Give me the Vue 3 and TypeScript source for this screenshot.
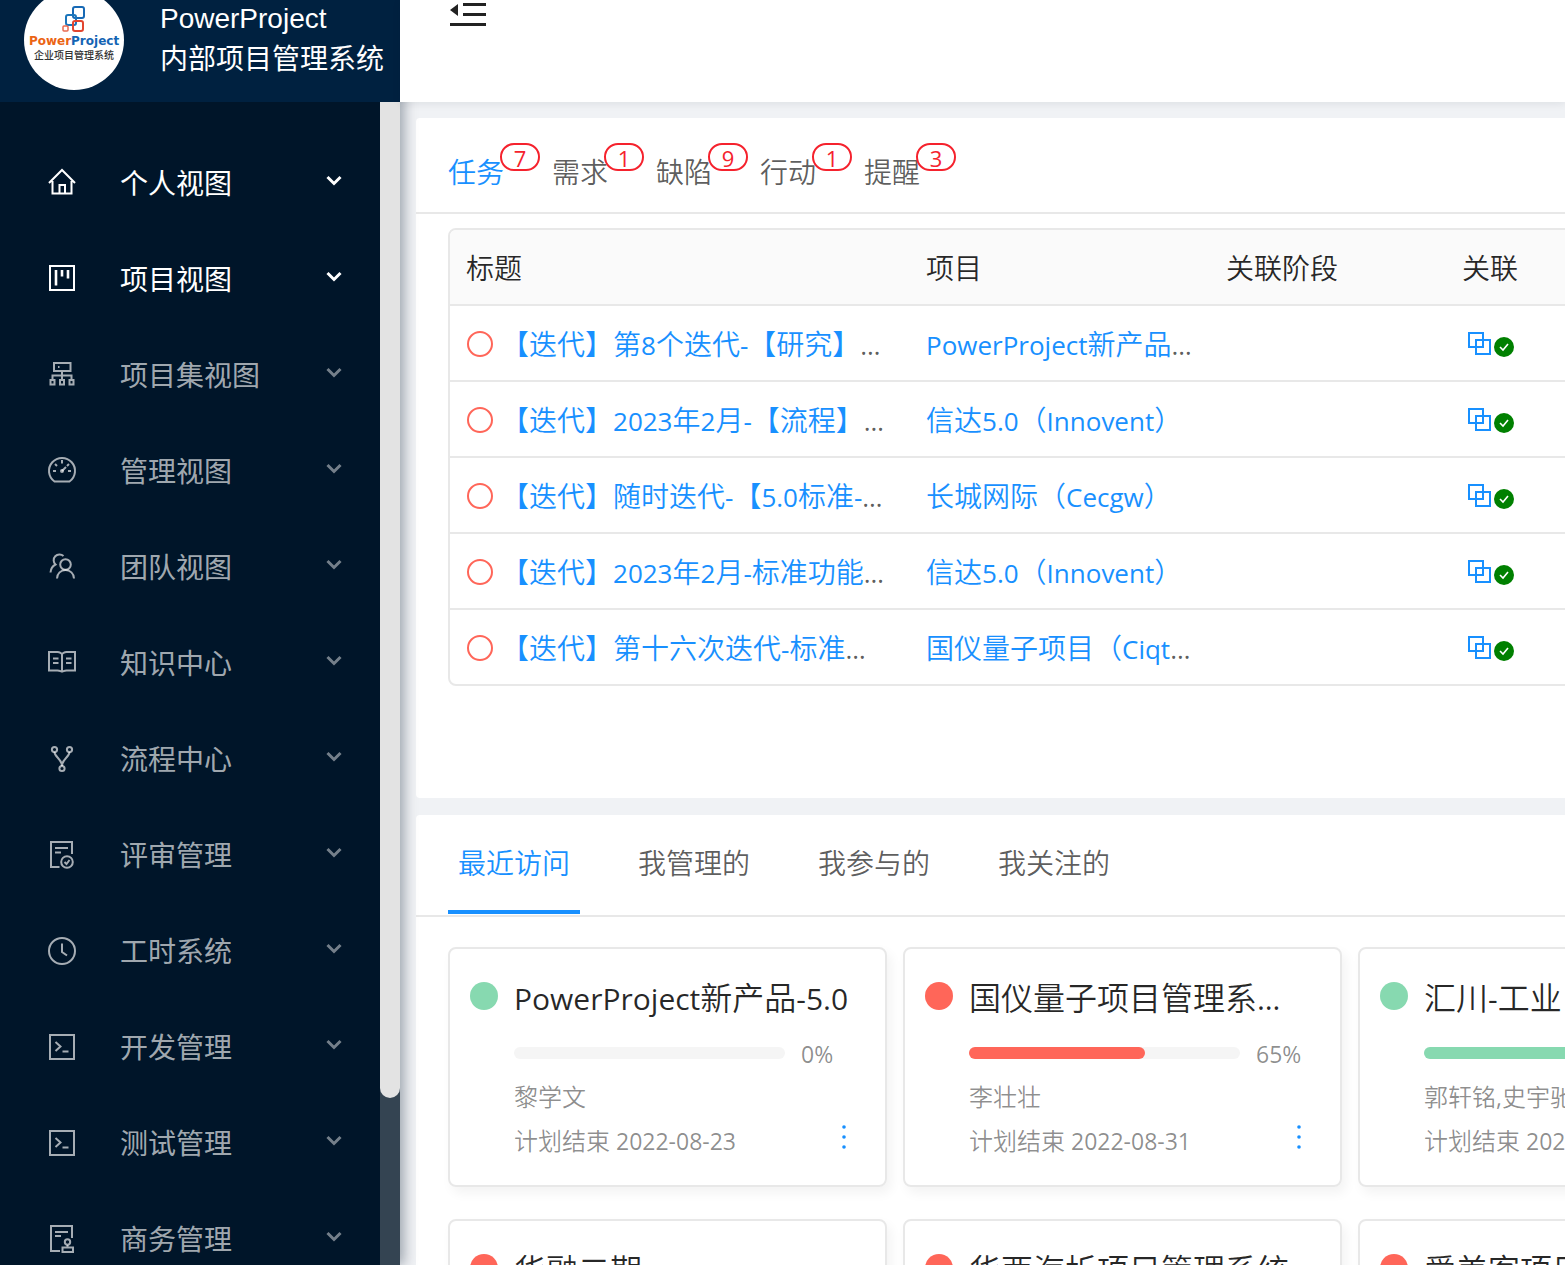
<script setup lang="ts">
import { h, ref } from 'vue'

interface MenuItem { icon: string; label: string; active?: boolean }
interface TodoTab { label: string; count: number }
interface TaskRow { title: string; project: string; projectCut?: boolean }
interface ProjectCard { name: string; cut?: boolean; color: string; percent: number; members: string; end: string }

// Latin letters and digits are set slightly smaller than the Chinese text beside them
const MixedText = (props: { text: string }) =>
  h('span', props.text.split(/([\x20-\x7e…]+)/).filter(Boolean).map(run =>
    /^[\x20-\x7e…]/.test(run) ? h('span', { class: 'latin' }, run) : run))
MixedText.props = ['text']

const icons: Record<string, string> = {
  home: '<path d="M1 15 14 2l13 13M4.500 13v12.500h19V13M11.500 25.500v-8.500h5.500v8.500"/>',
  project: '<path d="M2 2h24v24H2z"/><path stroke-width="2.600" d="M8 6v15.500M14 6v6.500M20 6v8.500"/>',
  cluster: '<path d="M6 3h16.500v8H6zM14 11v8M4.500 20v-4.500h19V20M2.500 20h4v4.500h-4zM12 20h4v4.500h-4zM21.500 20h4v4.500h-4z"/><path d="M10 7h1.500"/>',
  dashboard: '<path d="M6.500 25.500A13 13 0 1 1 21.500 25.500z"/><path d="M14 4v3.500M5 15h3M20 15h3M7 8l2 2M21 8l-2 2M14 15l4-4"/><circle cx="14" cy="15" r="1"/>',
  team: '<circle cx="17.500" cy="12.500" r="5.300"/><path d="M9 26.500c0-5 4-8.500 8.500-8.500S26 21.500 26 26.500M15.500 4A5.800 5.800 0 1 0 7.500 12.500C4.500 14 2.800 17 2.500 20.500"/>',
  book: '<path d="M1 4h8.500c2 0 4.500 1.300 4.500 2.500C14 5.300 16.500 4 18.500 4H27v18.500h-8.500c-2 0-4.500 1-4.500 2 0-1-2.500-2-4.500-2H1zM14 6.500v17M5 10.500h5.500M5 15h5.500M18 10.500h5.500M18 15h5.500"/>',
  fork: '<circle cx="6.500" cy="5.500" r="2.600"/><circle cx="21.500" cy="5.500" r="2.600"/><circle cx="14" cy="24.500" r="2.600"/><path d="M6.500 8c0 5 7.500 7 7.500 14M21.500 8c0 5-7.500 7-7.500 14"/>',
  audit: '<path d="M11.500 27H3V2h21v12M7 8h13M7 12.500h6"/><circle cx="19" cy="22" r="5.800"/><path d="m16.500 22 2 2 3-4"/>',
  clock: '<circle cx="14" cy="15" r="13"/><path d="M14 7.500V16l5 3.500"/>',
  code: '<path d="M2 3h24v24H2z"/><path d="m7.500 10 5 4.500-5 4.500M14.500 19.500h6"/>',
  solution: '<path d="M12 27H3V2h21v12M7 8h13M7 12h6"/><circle cx="19.500" cy="18" r="2.700"/><path d="M19.500 21v2.500M14.500 23.500h10.500V28H14.500z"/>',
}

const menu: MenuItem[] = [
  { icon: 'home', label: '个人视图', active: true },
  { icon: 'project', label: '项目视图', active: true },
  { icon: 'cluster', label: '项目集视图' },
  { icon: 'dashboard', label: '管理视图' },
  { icon: 'team', label: '团队视图' },
  { icon: 'book', label: '知识中心' },
  { icon: 'fork', label: '流程中心' },
  { icon: 'audit', label: '评审管理' },
  { icon: 'clock', label: '工时系统' },
  { icon: 'code', label: '开发管理' },
  { icon: 'code', label: '测试管理' },
  { icon: 'solution', label: '商务管理' },
]

const todoTabs: TodoTab[] = [
  { label: '任务', count: 7 },
  { label: '需求', count: 1 },
  { label: '缺陷', count: 9 },
  { label: '行动', count: 1 },
  { label: '提醒', count: 3 },
]
const todoTab = ref(0)

const tasks: TaskRow[] = [
  { title: '【迭代】第8个迭代-【研究】', project: 'PowerProject新产品', projectCut: true },
  { title: '【迭代】2023年2月-【流程】', project: '信达5.0（Innovent）' },
  { title: '【迭代】随时迭代-【5.0标准-', project: '长城网际（Cecgw）' },
  { title: '【迭代】2023年2月-标准功能', project: '信达5.0（Innovent）' },
  { title: '【迭代】第十六次迭代-标准', project: '国仪量子项目（Ciqt', projectCut: true },
]

const projectTabs = ['最近访问', '我管理的', '我参与的', '我关注的']
const projectTab = ref(0)

const green = '#87d9b0'
const red = '#ff6659'
const projects: ProjectCard[] = [
  { name: 'PowerProject新产品-5.0', color: green, percent: 0, members: '黎学文', end: '2022-08-23' },
  { name: '国仪量子项目管理系', cut: true, color: red, percent: 65, members: '李壮壮', end: '2022-08-31' },
  { name: '汇川-工业', color: green, percent: 100, members: '郭轩铭,史宇驰', end: '2022-08-31' },
  { name: '华融二期', color: red, percent: 0, members: '', end: '' },
  { name: '华西海圻项目管理系统', color: red, percent: 0, members: '', end: '' },
  { name: '爱美客项目', color: red, percent: 0, members: '', end: '' },
]
</script>

<template>
  <div class="app">
    <aside class="sidebar">
      <div class="brand">
        <div class="logo">
          <svg class="logo-mark" viewBox="0 0 24 27" width="24" height="27" fill="none" stroke-width="2">
            <rect x="11" y="1" width="11" height="11" rx="2" stroke="#1769b5" />
            <rect x="4" y="9" width="10" height="10" rx="2" stroke="#1b75bb" />
            <rect x="11" y="15" width="10" height="10" rx="2" stroke="#e2452f" />
            <rect x="1" y="20" width="5" height="5" rx="1" stroke="#e8694f" stroke-width="1.500" />
          </svg>
          <div class="logo-name"><span>Power</span>Project</div>
          <div class="logo-sub">企业项目管理系统</div>
        </div>
        <div class="brand-name">PowerProject<br>内部项目管理系统</div>
      </div>
      <div class="menu-wrap">
        <nav class="menu">
          <button v-for="item in menu" :key="item.label" type="button" class="menu-item" :class="{ active: item.active }">
            <svg class="menu-icon" viewBox="0 0 28 28" width="28" height="28" v-html="icons[item.icon]" />
            <span class="menu-label">{{ item.label }}</span>
            <svg class="chevron" viewBox="0 0 16 12" width="16" height="12"><path d="m1.500 2 6.500 6.500L14.500 2" /></svg>
          </button>
        </nav>
        <div class="track"><div class="thumb" /></div>
      </div>
    </aside>

    <div class="page">
      <header class="topbar">
        <button type="button" class="fold" aria-label="收起菜单">
          <svg viewBox="0 0 36 24" width="36" height="24" fill="#222">
            <path d="M13 1h23v3H13zM13 11h23v3H13zM0 21h36v3H0zM8 2v12L0 8z" />
          </svg>
        </button>
      </header>

      <main class="content">
        <section class="panel todo">
          <div class="todo-tabs">
            <button v-for="(tab, i) in todoTabs" :key="tab.label" type="button" class="todo-tab" :class="{ on: i === todoTab }" @click="todoTab = i">
              {{ tab.label }}<span class="badge">{{ tab.count }}</span>
            </button>
          </div>
          <div class="table-box">
            <table>
              <colgroup><col class="c-title"><col class="c-project"><col class="c-stage"><col class="c-link"></colgroup>
              <thead>
                <tr><th>标题</th><th>项目</th><th>关联阶段</th><th class="center">关联</th></tr>
              </thead>
              <tbody>
                <tr v-for="(row, i) in tasks" :key="i">
                  <td>
                    <div class="cell">
                      <span class="ring" />
                      <span><a href="#"><MixedText :text="row.title" /></a><MixedText text="…" /></span>
                    </div>
                  </td>
                  <td><a href="#"><MixedText :text="row.project" /></a><MixedText v-if="row.projectCut" text="…" /></td>
                  <td />
                  <td>
                    <div class="links">
                      <svg viewBox="0 0 24 24" width="24" height="24" fill="none" stroke="#1890ff" stroke-width="2"><path d="M2 1h14v14H2zM9 8h14v14H9z" /></svg>
                      <svg class="ok" viewBox="0 0 20 20" width="20" height="20"><circle cx="10" cy="10" r="10" fill="#008000" /><path d="m6 10 3 3 5-6" fill="none" stroke="#fff" stroke-width="1.600" /></svg>
                    </div>
                  </td>
                </tr>
              </tbody>
            </table>
          </div>
        </section>

        <section class="panel projects">
          <div class="project-tabs">
            <button v-for="(tab, i) in projectTabs" :key="tab" type="button" class="project-tab" :class="{ on: i === projectTab }" @click="projectTab = i">{{ tab }}</button>
          </div>
          <div class="cards">
            <article v-for="p in projects" :key="p.name" class="card">
              <span class="dot" :style="{ background: p.color }" />
              <div class="card-body">
                <h3><MixedText :text="p.name + (p.cut ? '…' : '')" /></h3>
                <div class="progress">
                  <div class="bar"><div class="fill" :style="{ width: p.percent + '%', background: p.color }" /></div>
                  <MixedText :text="p.percent + '%'" />
                </div>
                <div class="members"><MixedText :text="p.members" /></div>
                <div class="end">
                  <MixedText :text="'计划结束 ' + p.end" />
                  <button type="button" class="more" aria-label="更多">
                    <svg viewBox="0 0 4 24" width="4" height="24" fill="#1890ff"><circle cx="2" cy="2" r="1.800" /><circle cx="2" cy="12" r="1.800" /><circle cx="2" cy="22" r="1.800" /></svg>
                  </button>
                </div>
              </div>
            </article>
          </div>
        </section>
      </main>
    </div>
  </div>
</template>

<style>
body {
  margin: 0;
  overflow: hidden;
}
</style>

<style scoped>
.app {
  display: flex;
  height: 100vh;
  overflow: hidden;
  background: #f0f2f5;
  color: rgba(0, 0, 0, 0.65);
  font: 350 28px/40px "Noto Sans CJK SC", sans-serif;
}
.app * {
  box-sizing: border-box;
}
button {
  margin: 0;
  padding: 0;
  border: 0;
  background: none;
  color: inherit;
  font: inherit;
  cursor: pointer;
}
a {
  color: #1890ff;
  text-decoration: none;
}
:deep(.latin) {
  font-family: "Open Sans", "Noto Sans", sans-serif;
  font-size: 26px;
  font-weight: 400;
}

/* Sidebar */
.sidebar {
  position: relative;
  display: flex;
  flex: none;
  flex-direction: column;
  width: 400px;
  background: #001529;
  box-shadow: 4px 0 12px rgba(0, 21, 41, 0.35);
  color: #fff;
  font-weight: 400;
}
.brand {
  display: flex;
  flex: none;
  align-items: flex-end;
  gap: 36px;
  height: 102px;
  padding: 0 0 12px 24px;
  overflow: hidden;
  background: #002140;
}
.logo {
  display: flex;
  flex: none;
  flex-direction: column;
  align-items: center;
  width: 100px;
  height: 100px;
  padding-top: 16px;
  border-radius: 50%;
  background: #fff;
  color: #333;
}
.logo-name {
  color: #1464b4;
  font: 700 12px/16px "DejaVu Sans", sans-serif;
}
.logo-name span {
  color: #eb6414;
}
.logo-sub {
  font-size: 10px;
  font-weight: 500;
  line-height: 12px;
  white-space: nowrap;
}
.brand-name {
  padding-bottom: 10px;
  font-family: "Liberation Sans", "Noto Sans CJK SC", sans-serif;
  line-height: 41px;
  white-space: nowrap;
}
.menu-wrap {
  display: flex;
  flex: 1;
  min-height: 0;
}
.menu {
  display: flex;
  flex: 1;
  flex-direction: column;
  gap: 16px;
  padding-top: 40px;
  overflow: hidden;
}
.menu-item {
  display: flex;
  flex: none;
  align-items: center;
  height: 80px;
  padding: 0 38px 0 48px;
  color: rgba(255, 255, 255, 0.65);
  text-align: left;
}
.menu-item.active {
  color: #fff;
}
.menu-icon {
  flex: none;
  margin-right: 44px;
  overflow: visible;
  fill: none;
  stroke: currentColor;
  stroke-width: 2;
}
.menu-label {
  flex: 1;
}
.chevron {
  margin-bottom: 2px;
  fill: none;
  opacity: 0.7;
  stroke: currentColor;
  stroke-width: 3;
}
.active .chevron {
  opacity: 1;
}
.track {
  flex: none;
  width: 20px;
  background: #344452;
}
.thumb {
  height: calc(100% - 167px);
  border-radius: 0 0 10px 10px;
  background: #e3e3e3;
}

/* Page */
.page {
  display: flex;
  flex: 1;
  flex-direction: column;
  min-width: 0;
}
.topbar {
  position: relative;
  z-index: 1;
  display: flex;
  flex: none;
  align-items: flex-start;
  height: 102px;
  padding: 2px 50px;
  background: #fff;
  box-shadow: 0 2px 8px rgba(0, 21, 41, 0.08);
}
.fold {
  display: flex;
}
.content {
  display: flex;
  flex: 1;
  flex-direction: column;
  gap: 17px;
  min-height: 0;
  padding: 16px 0 0 16px;
  overflow: hidden;
}
.panel {
  flex: none;
  overflow: hidden;
  border-radius: 4px 0 0 4px;
  background: #fff;
}
.todo {
  min-height: 680px;
}
.todo-tabs {
  display: flex;
  gap: 48px;
  padding: 33px 32px 21px;
  border-bottom: 2px solid #e8e8e8;
}
.todo-tab {
  position: relative;
}
.on {
  color: #1890ff;
}
.badge {
  position: absolute;
  top: -8px;
  left: 52px;
  width: 40px;
  height: 28px;
  border: 2px solid #f5222d;
  border-radius: 14px;
  background: #fff;
  color: #f5222d;
  font: 400 22px/26px "Open Sans", sans-serif;
}
.table-box {
  width: max-content;
  margin: 14px 32px 0;
  overflow: hidden;
  border: 2px solid #e8e8e8;
  border-radius: 8px;
}
table {
  width: 1120px;
  border-collapse: separate;
  border-spacing: 0;
  table-layout: fixed;
}
.c-title { width: 460px; }
.c-project { width: 300px; }
.c-stage { width: 200px; }
.c-link { width: 160px; }
th,
td {
  height: 76px;
  padding: 0 16px;
  border-bottom: 2px solid #e8e8e8;
  text-align: left;
  white-space: nowrap;
}
td {
  padding-top: 2px;
}
th {
  background: #fafafa;
  color: rgba(0, 0, 0, 0.85);
  font-weight: 350;
}
tbody tr:last-child td {
  height: 74px;
  border-bottom: 0;
}
.center {
  text-align: center;
}
.cell {
  display: flex;
  align-items: center;
  gap: 8px;
}
.ring {
  width: 26px;
  height: 26px;
  margin-left: 1px;
  border: 2px solid #ff6659;
  border-radius: 50%;
}
.links {
  display: flex;
  align-items: center;
  justify-content: center;
  gap: 3px;
}
.ok {
  margin-top: 6px;
}

/* Projects */
.project-tabs {
  display: flex;
  gap: 48px;
  padding: 0 32px;
  border-bottom: 2px solid #e8e8e8;
}
.project-tab {
  height: 99px;
  margin-bottom: 1px;
  padding: 0 10px 2px;
  border-bottom: 4px solid transparent;
}
.project-tab.on {
  border-color: #1890ff;
}
.cards {
  display: grid;
  grid-template-columns: repeat(3, 439px);
  gap: 32px 16px;
  padding: 30px 32px;
}
.card {
  display: flex;
  gap: 16px;
  height: 240px;
  padding: 24px 36px 0 20px;
  border: 2px solid #e8e8e8;
  border-radius: 8px;
  box-shadow: 4px 6px 12px rgba(0, 0, 0, 0.05);
  color: rgba(0, 0, 0, 0.45);
  font-size: 24px;
}
.card :deep(.latin) {
  font-size: 23px;
}
.dot {
  flex: none;
  width: 28px;
  height: 28px;
  margin-top: 9px;
  border-radius: 50%;
}
.card-body {
  flex: 1;
  min-width: 0;
}
h3 {
  height: 46px;
  margin: 0 0 18px;
  color: rgba(0, 0, 0, 0.85);
  font-size: 32px;
  font-weight: 350;
  line-height: 46px;
  white-space: nowrap;
}
.card h3 :deep(.latin) {
  font-size: 30px;
}
.progress {
  display: flex;
  align-items: center;
  gap: 16px;
  height: 32px;
}
.bar {
  flex: none;
  width: 271px;
  height: 12px;
  border-radius: 6px;
  background: #f5f5f5;
}
.fill {
  height: 12px;
  border-radius: 6px;
}
.members,
.end {
  height: 45px;
  line-height: 45px;
  white-space: nowrap;
}
.members {
  margin-top: 4px;
}
.end {
  display: flex;
  align-items: center;
  justify-content: space-between;
}
.more {
  display: flex;
  margin: 0 3px 8px 0;
}
</style>
